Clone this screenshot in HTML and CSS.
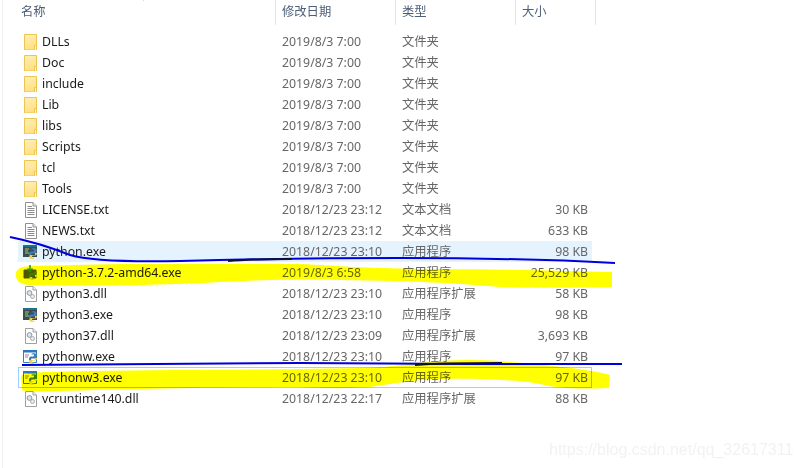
FILE: index.html
```html
<!DOCTYPE html>
<html lang="zh-CN">
<head>
<meta charset="utf-8">
<title>Python</title>
<link rel="stylesheet" href="styles.css">
</head>
<body>
<svg class="defs" aria-hidden="true">
  <defs>
    <linearGradient id="fg" x1="0" y1="0" x2="0.3" y2="1"><stop offset="0" stop-color="#fff0b8"/><stop offset="1" stop-color="#ffdf84"/></linearGradient>
    <symbol id="folder" viewBox="0 0 16 16">
      <path d="M1.5 .5H13.500V16H1.500Z" fill="url(#fg)" stroke="#ecc64e"/>
      <path d="M11.500 16V11.500H13.500" fill="none" stroke="#ecc64e"/>
      <path d="M12 16V12H13V16Z" fill="#fff6d4"/>
    </symbol>
    <symbol id="txt" viewBox="0 0 16 16">
      <path d="M2.500 .5H10L13.500 4V15.500H2.500Z" fill="#fff" stroke="#8f8f8f"/>
      <path d="M10 .5V4H13.500" fill="#eee" stroke="#8f8f8f"/>
      <path d="M4.500 4.500H9M4.500 6.500H11.500M4.500 8.500H11.500M4.500 10.500H11.500M4.500 12.500H11.500" stroke="#8a8a8a" fill="none"/>
    </symbol>
    <symbol id="dll" viewBox="0 0 16 16">
      <path d="M2.500 .5H10L13.500 4V15.500H2.500Z" fill="#fff" stroke="#a0a0a0"/>
      <path d="M10 .5V4H13.500" fill="#eee" stroke="#a0a0a0"/>
      <circle cx="6.500" cy="7" r="2.400" fill="#dfe4e8" stroke="#8e989f"/>
      <circle cx="9.500" cy="10.500" r="2" fill="#e8ebee" stroke="#a4adb3"/>
    </symbol>
    <symbol id="py" viewBox="0 0 16 16">
      <path d="M0 1H14V13H0Z" fill="#3c4a52"/>
      <path d="M0 1H14V3H0Z" fill="#1f6f8f"/>
      <path d="M2 5H6M2 7H5M2 9H6" stroke="#9bd36a" fill="none"/>
      <path d="M6 10C6 7 8 7.500 10 7.500C11 7.500 11 6.500 11 5.500H8.500V5C8.500 4 13 3.500 13.500 5.500C14 7 13.500 9.500 12 9.500H9C8 9.500 8 10.500 8 11.500H6Z" fill="#3f7fb5"/>
      <path d="M14 9C14 12 12 11.500 10 11.500C9 11.500 9 12.500 9 13.500H11.500V14C11.500 15 7 15.500 6.500 13.500C6 12 6.500 11 8 11H12V9Z" fill="#f5cf4a"/>
    </symbol>
    <symbol id="pyw" viewBox="0 0 16 16">
      <path d="M.5 1.500H13.500V13.500H.5Z" fill="#fff" stroke="#2f7fc4"/>
      <path d="M0 1H14V3.500H0Z" fill="#2a78bf"/>
      <path d="M2 6H6M2 8H5" stroke="#8a8a8a" fill="none"/>
      <path d="M6 10C6 7 8 7.500 10 7.500C11 7.500 11 6.500 11 5.500H8.500V5C8.500 4 13 3.500 13.500 5.500C14 7 13.500 9.500 12 9.500H9C8 9.500 8 10.500 8 11.500H6Z" fill="#3f7fb5"/>
      <path d="M14 9C14 12 12 11.500 10 11.500C9 11.500 9 12.500 9 13.500H11.500V14C11.500 15 7 15.500 6.500 13.500C6 12 6.500 11 8 11H12V9Z" fill="#f5cf4a"/>
    </symbol>
    <symbol id="inst" viewBox="0 0 16 16">
      <path d="M1 5H13V13H1Z" fill="#4d5a4d" stroke="#555"/>
      <path d="M7 0V6M4.500 3.500L7 6.500L9.500 3.500" stroke="#2e8b3d" stroke-width="1.500" fill="none"/>
      <path d="M6 10C6 8 8 8 10 8C11 8 11 7 11 6.500H13.500C14 8 13.500 10.500 12 10.500H9C8 10.500 8 11 8 12H6Z" fill="#3f7fb5"/>
      <path d="M14 10C14 12.500 12 12 10 12C9 12 9 13 9 14H11.500C11.500 15.500 7 15.500 6.500 14C6 12.500 6.500 12 8 12H12V10Z" fill="#f5cf4a"/>
    </symbol>
  </defs>
</svg>

<main class="explorer">
  <header class="head">
    <div class="hcell hname"><span class="sort"></span>名称</div>
    <div class="hcell hdate">修改日期</div>
    <div class="hcell htype">类型</div>
    <div class="hcell hsize">大小</div>
  </header>
  <div class="rows">
    <div class="row"><span class="name"><svg class="ico"><use href="#folder"/></svg>DLLs</span><span class="date">2019/8/3 7:00</span><span class="type">文件夹</span><span class="size"></span></div>
    <div class="row"><span class="name"><svg class="ico"><use href="#folder"/></svg>Doc</span><span class="date">2019/8/3 7:00</span><span class="type">文件夹</span><span class="size"></span></div>
    <div class="row"><span class="name"><svg class="ico"><use href="#folder"/></svg>include</span><span class="date">2019/8/3 7:00</span><span class="type">文件夹</span><span class="size"></span></div>
    <div class="row"><span class="name"><svg class="ico"><use href="#folder"/></svg>Lib</span><span class="date">2019/8/3 7:00</span><span class="type">文件夹</span><span class="size"></span></div>
    <div class="row"><span class="name"><svg class="ico"><use href="#folder"/></svg>libs</span><span class="date">2019/8/3 7:00</span><span class="type">文件夹</span><span class="size"></span></div>
    <div class="row"><span class="name"><svg class="ico"><use href="#folder"/></svg>Scripts</span><span class="date">2019/8/3 7:00</span><span class="type">文件夹</span><span class="size"></span></div>
    <div class="row"><span class="name"><svg class="ico"><use href="#folder"/></svg>tcl</span><span class="date">2019/8/3 7:00</span><span class="type">文件夹</span><span class="size"></span></div>
    <div class="row"><span class="name"><svg class="ico"><use href="#folder"/></svg>Tools</span><span class="date">2019/8/3 7:00</span><span class="type">文件夹</span><span class="size"></span></div>
    <div class="row"><span class="name"><svg class="ico"><use href="#txt"/></svg>LICENSE.txt</span><span class="date">2018/12/23 23:12</span><span class="type">文本文档</span><span class="size">30 KB</span></div>
    <div class="row"><span class="name"><svg class="ico"><use href="#txt"/></svg>NEWS.txt</span><span class="date">2018/12/23 23:12</span><span class="type">文本文档</span><span class="size">633 KB</span></div>
    <div class="row hover"><span class="name"><svg class="ico"><use href="#py"/></svg>python.exe</span><span class="date">2018/12/23 23:10</span><span class="type">应用程序</span><span class="size">98 KB</span></div>
    <div class="row"><span class="name"><svg class="ico"><use href="#inst"/></svg>python-3.7.2-amd64.exe</span><span class="date">2019/8/3 6:58</span><span class="type">应用程序</span><span class="size">25,529 KB</span></div>
    <div class="row"><span class="name"><svg class="ico"><use href="#dll"/></svg>python3.dll</span><span class="date">2018/12/23 23:10</span><span class="type">应用程序扩展</span><span class="size">58 KB</span></div>
    <div class="row"><span class="name"><svg class="ico"><use href="#py"/></svg>python3.exe</span><span class="date">2018/12/23 23:10</span><span class="type">应用程序</span><span class="size">98 KB</span></div>
    <div class="row"><span class="name"><svg class="ico"><use href="#dll"/></svg>python37.dll</span><span class="date">2018/12/23 23:09</span><span class="type">应用程序扩展</span><span class="size">3,693 KB</span></div>
    <div class="row"><span class="name"><svg class="ico"><use href="#pyw"/></svg>pythonw.exe</span><span class="date">2018/12/23 23:10</span><span class="type">应用程序</span><span class="size">97 KB</span></div>
    <div class="row focus"><span class="name"><svg class="ico"><use href="#pyw"/></svg>pythonw3.exe</span><span class="date">2018/12/23 23:10</span><span class="type">应用程序</span><span class="size">97 KB</span></div>
    <div class="row"><span class="name"><svg class="ico"><use href="#dll"/></svg>vcruntime140.dll</span><span class="date">2018/12/23 22:17</span><span class="type">应用程序扩展</span><span class="size">88 KB</span></div>
  </div>
</main>

<svg class="marks" viewBox="0 0 800 468" aria-hidden="true">
  <path class="yellow" d="M16 273C17 268 22 267 30 266L120 264L300 264C340 266 360 268 420 269C500 269 560 271 612 272L612 287C560 288 530 288 500 287C450 283 420 281 340 280C300 279 260 280 220 282C150 286 80 286 30 285C20 285 15 280 16 273Z"/>
  <path class="yellow" d="M21 376C24 372 40 372 90 371C160 370 240 370 300 369C340 368 380 369 410 364C440 360 470 359 500 361C550 365 590 369 610 375L609 388C580 389 560 389 540 384C520 380 480 378 440 379C410 380 390 384 370 387C340 389 320 388 300 387C240 387 120 389 60 391C40 392 25 392 22 390Z"/>
  <path class="blue" d="M10 237C30 241 50 247 70 255C90 261 130 262 180 261C260 259 330 258 400 258C480 258 560 260 615 263"/>
  <path class="ink" d="M228 261C250 259 270 259 292 259"/>
  <path class="blue" d="M22 365C100 364 200 363 300 363C400 364 520 364 622 364"/>
  <path class="ink" d="M415 365C440 363 470 363 502 363"/>
</svg>
<div class="watermark">https://blog.csdn.net/qq_32617311</div>
</body>
</html>
```
FILE: styles.css
```css
html, body {
  margin: 0;
  padding: 0;
  background: #fff;
}
body {
  width: 800px;
  height: 468px;
  overflow: hidden;
  position: relative;
  font-family: "Noto Sans", "Noto Sans CJK SC", sans-serif;
  font-size: 12.3px;
}
.defs {
  position: absolute;
  width: 0;
  height: 0;
}
.explorer {
  height: 468px;
  margin-left: 2px;
  border-left: 1px solid #f0f0f0;
  padding-left: 15px;
  box-sizing: border-box;
}
.head {
  display: grid;
  grid-template-columns: 258px 120px 120px 80px;
  height: 25px;
  margin-bottom: 6px;
  color: #4c607a;
}
.hcell {
  position: relative;
  line-height: 24px;
  padding-left: 6px;
  border-right: 1px solid #e5e5e5;
  box-sizing: border-box;
}
.hname {
  padding-left: 3px;
}
.sort {
  position: absolute;
  left: 125px;
  top: 0;
  width: 5px;
  height: 3px;
  border-top: 1px solid #a8a8a8;
  border-right: 1px solid #a8a8a8;
  transform: rotate(-45deg);
  transform-origin: 0 0;
}
.row {
  display: grid;
  grid-template-columns: 257px 120px 120px 73px;
  height: 21px;
  width: 574px;
  line-height: 21px;
  align-items: center;
  color: #666;
  box-sizing: border-box;
}
.hover {
  background: #e5f3ff;
}
.focus {
  outline: 1px solid #99d1ff;
  outline-offset: -1px;
}
.name {
  display: flex;
  align-items: center;
  color: #1a1a1a;
  padding-left: 5px;
}
.ico {
  width: 16px;
  height: 16px;
  margin-right: 3px;
  flex: none;
}
.date {
  padding-left: 7px;
}
.type {
  padding-left: 7px;
}
.size {
  text-align: right;
}
.marks {
  position: absolute;
  left: 0;
  top: 0;
  width: 800px;
  height: 468px;
  pointer-events: none;
}
.yellow {
  fill: #ffff00;
  mix-blend-mode: multiply;
}
.blue {
  fill: none;
  stroke: #0000dc;
  stroke-width: 2;
}
.ink {
  fill: none;
  stroke: #101030;
  stroke-width: 2;
}
.watermark {
  position: absolute;
  left: 549px;
  top: 440px;
  font-family: "Liberation Sans", sans-serif;
  font-size: 16px;
  line-height: 20px;
  color: #f2f2f2;
  white-space: nowrap;
}
```
